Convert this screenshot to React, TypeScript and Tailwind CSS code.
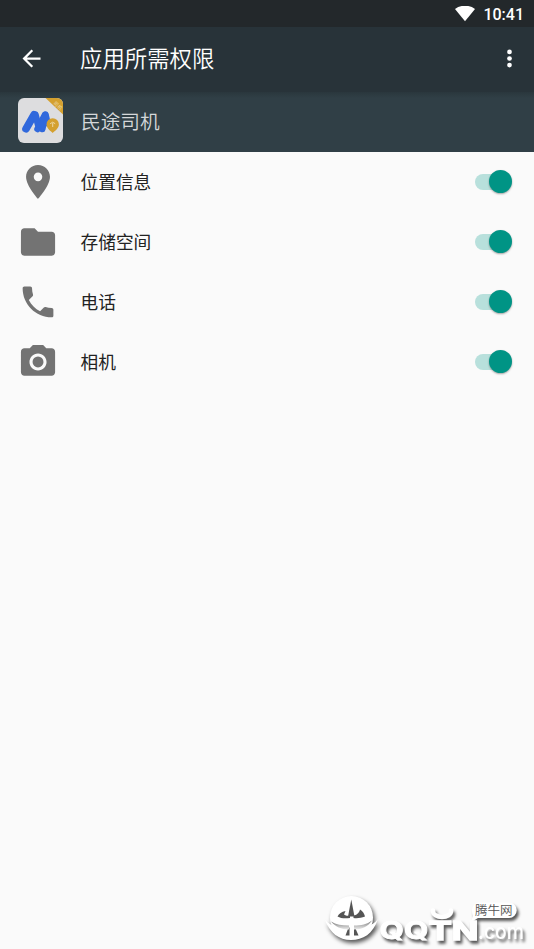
import type { ReactNode } from "react";

type Permission = {
  id: string;
  label: string;
  icon: ReactNode;
};

const permissions: Permission[] = [
  {
    id: "location",
    label: "位置信息",
    icon: (
      <path d="M12 2C8.13 2 5 5.13 5 9c0 5.25 7 13 7 13s7-7.75 7-13c0-3.87-3.13-7-7-7zm0 9.5a2.5 2.5 0 0 1 0-5 2.5 2.5 0 0 1 0 5z" />
    )
  },
  {
    id: "storage",
    label: "存储空间",
    icon: <path d="M10 4H4c-1.1 0-1.99.9-1.99 2L2 18c0 1.1.9 2 2 2h16c1.1 0 2-.9 2-2V8c0-1.1-.9-2-2-2h-8l-2-2z" />
  },
  {
    id: "phone",
    label: "电话",
    icon: (
      <path d="M6.62 10.79c1.44 2.83 3.76 5.14 6.59 6.59l2.2-2.2c.27-.27.67-.36 1.02-.24 1.12.37 2.33.57 3.57.57.55 0 1 .45 1 1V20c0 .55-.45 1-1 1-9.39 0-17-7.61-17-17 0-.55.45-1 1-1h3.5c.55 0 1 .45 1 1 0 1.25.2 2.45.57 3.57.11.35.03.74-.25 1.02l-2.2 2.2z" />
    )
  },
  {
    id: "camera",
    label: "相机",
    icon: (
      <>
        <circle cx="12" cy="12" r="3.2" />
        <path d="M9 2L7.17 4H4c-1.1 0-2 .9-2 2v12c0 1.1.9 2 2 2h16c1.1 0 2-.9 2-2V6c0-1.1-.9-2-2-2h-3.17L15 2H9zm3 15c-2.76 0-5-2.24-5-5s2.24-5 5-5 5 2.24 5 5-2.24 5-5 5z" />
      </>
    )
  }
];

function StatusBar() {
  return (
    <div className="flex h-[27px] items-center justify-end bg-[#23282b] pr-[10px] text-white">
      <svg className="h-4 w-5" viewBox="0 0 20 16" fill="currentColor">
        <path d="M0 3C2.8.9 6.2-.3 10-.3s7.2 1.200 10 3.300L10 15.200z" />
      </svg>
      <span className="ml-2 pt-0.5 font-[Roboto,sans-serif] text-base leading-[25px] font-medium">10:41</span>
    </div>
  );
}

function Toolbar() {
  return (
    <header className="flex h-[65px] items-center bg-[#283339] pb-[2px] text-white">
      <button type="button" aria-label="Back" className="ml-[18px]">
        <svg className="size-[27px]" viewBox="0 0 24 24" fill="currentColor">
          <path d="M20 11H7.83l5.59-5.59L12 4l-8 8 8 8 1.41-1.41L7.83 13H20v-2z" />
        </svg>
      </button>
      <h1 className="ml-[35px] flex-1 pb-[3px] text-[22.4px] leading-8 font-[350]">应用所需权限</h1>
      <button type="button" aria-label="More" className="mr-[11px]">
        <svg className="size-[27px]" viewBox="0 0 24 24" fill="currentColor">
          <circle cx="12" cy="6.2" r="2.1" />
          <circle cx="12" cy="12" r="2.1" />
          <circle cx="12" cy="17.8" r="2.1" />
        </svg>
      </button>
    </header>
  );
}

function AppIcon() {
  return (
    <svg className="size-[45px] rounded-[6px]" viewBox="0 0 45 45">
      <rect width="45" height="45" fill="#dddddf" />
      <path d="M27.5 0H45v16.5z" fill="#d4a02f" />
      <text x="35" y="5.5" fontSize="5" fill="#eddcae" transform="rotate(43 35 5.5)">
        司机
      </text>
      <g stroke="#3068dc" strokeLinecap="round" fill="none">
        <path d="M8 30.8L16 16.8" strokeWidth="7.6" />
        <path d="M19.5 31L27 16.8" strokeWidth="6.5" />
        <path d="M17.5 16.6l2.5 10M27.5 16.6l2 8.500M27.300 18l-3 13" strokeWidth="6.5" />
      </g>
      <path d="M34.7 35c-1.5-1.5-6.2-4.5-6.2-8.5a6.2 6.2 0 0 1 12.4 0c0 4-4.7 7-6.2 8.5z" fill="#d4a02f" />
      <path d="M32.2 25.7l2.5-1.5 2.5 1.5M34.7 25v4" stroke="#f0deb0" fill="none" strokeWidth=".9" />
    </svg>
  );
}

function Toggle() {
  return (
    <span role="switch" aria-checked="true" className="mb-px flex h-4 w-[37px] items-center">
      <span className="h-4 flex-1 rounded-l-full bg-[#b8e0dc]" />
      <span className="-ml-3 size-[23px] rounded-full bg-[#009485] shadow-[0_1px_2px_rgba(0,0,0,0.35)]" />
    </span>
  );
}

function Watermark() {
  return (
    <svg className="absolute right-0 bottom-0 h-[64px] w-[214px]" viewBox="320 885 214 64">
      <defs>
        <linearGradient id="hull" x1="0" y1="0" x2="0" y2="1">
          <stop offset="0" stopColor="#777" />
          <stop offset="1" stopColor="#eee" />
        </linearGradient>
      </defs>
      <g className="[filter:drop-shadow(2px_3px_2px_rgba(0,0,0,0.65))]" fill="#fff">
        <circle cx="351.5" cy="917.5" r="21.5" />
        <path d="M325 920c10 12 43 13 53-1-5 15-15 21-27 21s-21-7-26-20z" />
      </g>
      <g fill="#555">
        <path d="M351.3 899.5l3.2 17h-6.5z" />
        <path d="M337.5 916.5c1.5-3 4-4.5 8-5.5l-1.5 3.5c2 1.5 4 1.5 6 1v2.500c-5 .5-9 .5-12.5-1.5z" />
        <path d="M353.5 915.5c3-.5 5.500-2 6.5-6 3 2 4.500 4.500 5 7-4 1.500-7.500 2-11.500 1.500z" />
        <path d="M345.5 935.5l3-8h1v8z" />
        <path d="M358.5 935.5l-3.500-8h-1v8z" />
      </g>
      <g fill="url(#hull)">
        <path d="M331 921.5c5 3 11 4 18 4v4c-8 0-14-3-18-8z" />
        <path d="M372 920.5c-5 4-11 5-18 5v4c8 0 14-3 18-9z" />
      </g>
      <g className="[filter:drop-shadow(2px_3px_1.5px_rgba(0,0,0,0.65))]" fill="#fff">
        <text
          x="379.5"
          y="938.5"
          fontSize="24"
          fontWeight="700"
          stroke="#fff"
          strokeWidth=".8"
          textLength="49"
          lengthAdjust="spacingAndGlyphs"
          className="font-[Inter,sans-serif]"
        >
          QQ
        </text>
        <text
          x="428.5"
          y="939.5"
          fontSize="26"
          fontWeight="700"
          stroke="#fff"
          strokeWidth="1.4"
          textLength="50"
          lengthAdjust="spacingAndGlyphs"
          className="font-[Inter,sans-serif]"
        >
          TN
        </text>
        <text
          x="478"
          y="939"
          fontSize="22"
          fontWeight="500"
          textLength="46"
          lengthAdjust="spacingAndGlyphs"
          className="font-[Inter,sans-serif]"
        >
          .com
        </text>
        <path d="M433 910.5c-1 8.500 19 8.500 18 0" fill="none" stroke="#fff" strokeWidth="4.5" strokeLinecap="round" />
        <path d="M479 902.5h30a7.7 7.7 0 0 1 0 15.5h-31l-7 4 2-6c-3-7 1-13.500 6-13.5z" />
      </g>
      <text x="475" y="915" fontSize="12.5" fontWeight="350" fill="#555">
        腾牛网
      </text>
    </svg>
  );
}

export default function App() {
  return (
    <main className="relative h-[949px] w-full overflow-hidden bg-[#fafafa] font-['Noto_Sans_CJK_SC',sans-serif]">
      <StatusBar />
      <Toolbar />

      <section className="flex h-[60px] items-center bg-linear-to-b from-[#2a373d] to-[#303f46] to-10% pr-5 pb-1 pl-[18px]">
        <AppIcon />
        <span className="ml-[18px] pt-px text-[19.7px] leading-7 font-[350] text-[#d5d8da]">民途司机</span>
      </section>

      <ul>
        {permissions.map((permission) => (
          <li key={permission.id} className="flex h-[60px] items-center pr-[22px] pl-[17px]">
            <svg className="size-[41px]" viewBox="-0.3 0.3 24 24" fill="#737373">
              {permission.icon}
            </svg>
            <span className="ml-[22.5px] flex-1 pb-[2px] text-[17.7px] leading-6 text-[#222]">{permission.label}</span>
            <Toggle />
          </li>
        ))}
      </ul>

      <Watermark />
    </main>
  );
}
